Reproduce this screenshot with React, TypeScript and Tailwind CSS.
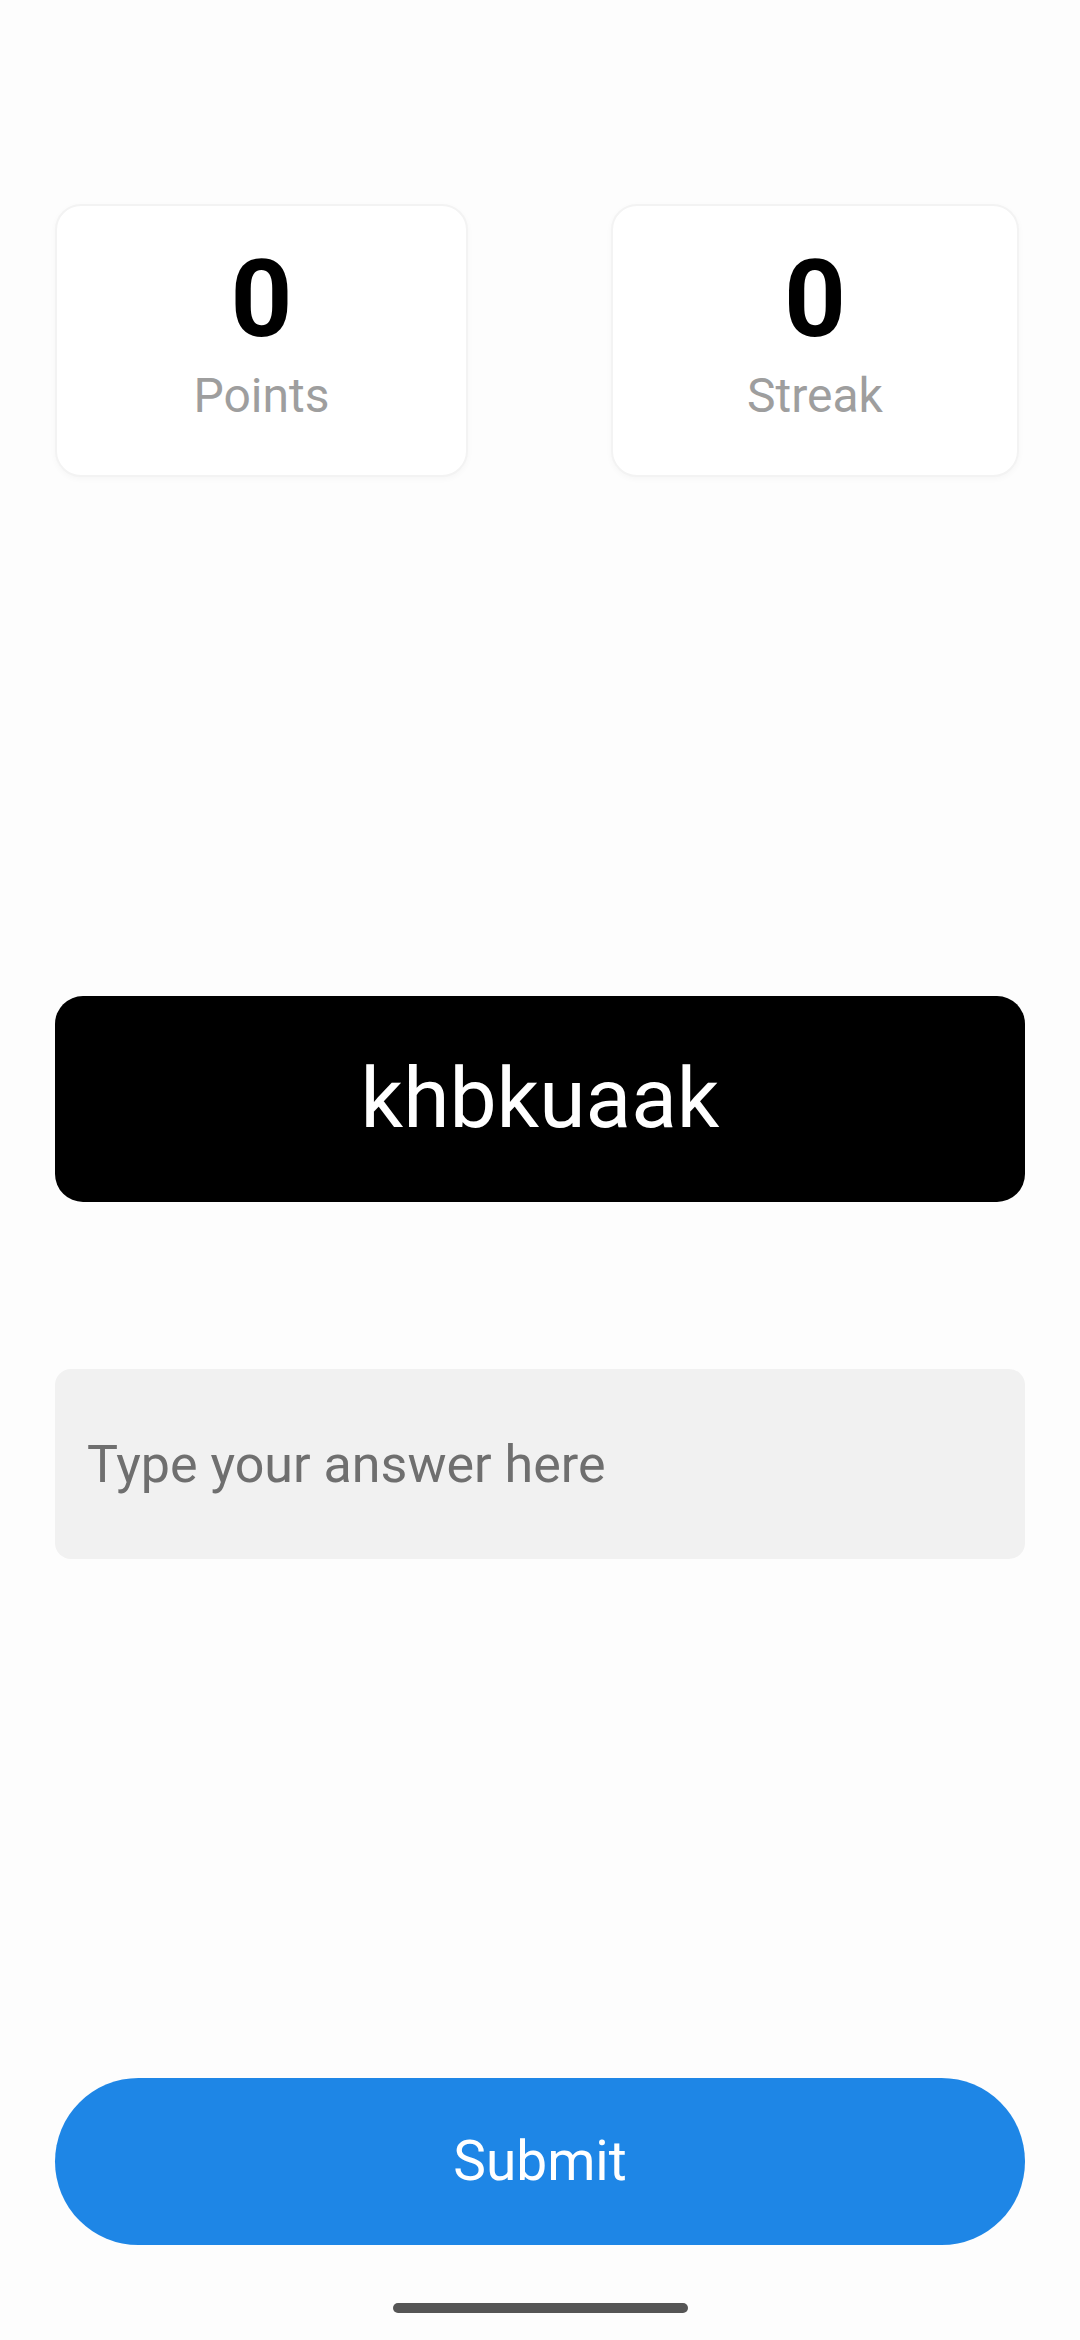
function StatCard({ value, label, className = "" }: { value: number; label: string; className?: string }) {
  return (
    <div
      className={`flex h-[273px] flex-col items-center gap-[19px] rounded-[26px] border-2 border-[#f3f3f3] bg-white pt-[39px] shadow-[0_2px_6px_rgba(0,0,0,0.03)] ${className}`}
    >
      <span className="text-[108px] font-bold leading-none text-black">{value}</span>
      <span className="text-[48px] leading-none text-[#9e9e9e]">{label}</span>
    </div>
  );
}

export default function App() {
  return (
    <div
      className="flex h-[2340px] w-[1080px] flex-col items-center overflow-hidden bg-[#fdfdfd]"
      style={{ fontFamily: "Roboto, 'Noto Sans', sans-serif" }}
    >
      {/* Score row */}
      <div className="mt-[204px] flex w-[964px] gap-[143px] self-start ml-[55px]">
        <StatCard value={0} label="Points" className="w-[413px]" />
        <StatCard value={0} label="Streak" className="w-[408px]" />
      </div>

      {/* Scrambled word */}
      <div className="mt-[519px] flex h-[206px] w-[970px] items-center justify-center rounded-[28px] bg-black">
        <span className="text-[84px] leading-none text-white">khbkuaak</span>
      </div>

      {/* Answer field */}
      <input
        type="text"
        placeholder="Type your answer here"
        className="mt-[167px] h-[190px] w-[970px] rounded-[16px] bg-[#f1f1f1] px-[32px] text-[52px] text-[#333] outline-none placeholder:text-[#6f6f6f]"
      />

      {/* Submit */}
      <button className="mt-[519px] flex h-[167px] w-[970px] items-center justify-center rounded-full bg-[#1e86e6] text-[55px] text-white">
        Submit
      </button>

      {/* Gesture bar */}
      <div className="mt-[58px] h-[10px] w-[295px] rounded-full bg-[#555555]" />
    </div>
  );
}
